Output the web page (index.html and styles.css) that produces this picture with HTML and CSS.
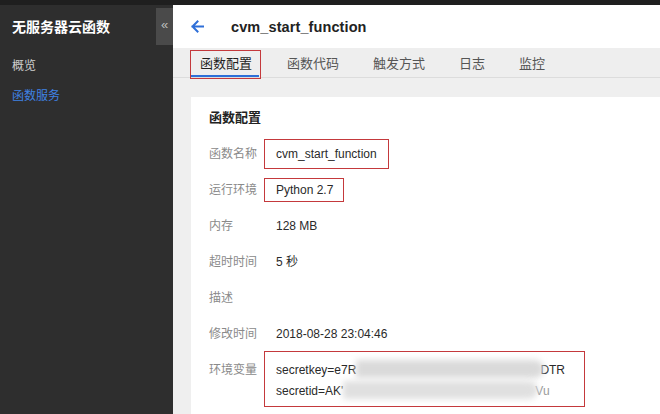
FILE: index.html
```html
<!DOCTYPE html>
<html lang="zh-CN">
<head>
<meta charset="utf-8">
<title>cvm_start_function</title>
<link rel="stylesheet" href="styles.css">
</head>
<body>
<div class="topbar"></div>
<div class="app">
  <aside class="sidebar">
    <div class="sb-title">无服务器云函数</div>
    <nav class="sb-nav">
      <a class="sb-link">概览</a>
      <a class="sb-link active">函数服务</a>
    </nav>
    <div class="collapse">«</div>
  </aside>
  <main class="main">
    <header class="header">
      <svg class="back" width="13" height="13" viewBox="0 0 13 13" aria-hidden="true">
        <path d="M6.5 1.5 L1.5 6.5 L6.5 11.5 M1.5 6.5 H12.5" fill="none" stroke="#2e6fd8" stroke-width="2" stroke-linecap="square"/>
      </svg>
      <h1 class="title">cvm_start_function</h1>
    </header>
    <div class="tabs">
      <div class="tab active">函数配置</div>
      <div class="tab">函数代码</div>
      <div class="tab">触发方式</div>
      <div class="tab">日志</div>
      <div class="tab">监控</div>
    </div>
    <div class="content">
      <section class="card">
        <h2 class="card-title">函数配置</h2>
        <div class="row"><span class="label">函数名称</span><span class="val boxed big">cvm_start_function</span></div>
        <div class="row"><span class="label">运行环境</span><span class="val boxed small">Python 2.7</span></div>
        <div class="row"><span class="label">内存</span><span class="val">128 MB</span></div>
        <div class="row"><span class="label">超时时间</span><span class="val">5 秒</span></div>
        <div class="row"><span class="label">描述</span><span class="val"></span></div>
        <div class="row"><span class="label">修改时间</span><span class="val">2018-08-28 23:04:46</span></div>
        <div class="row env">
          <span class="label">环境变量</span>
          <div class="val boxed envbox">
            <div class="envline">secretkey=e7R<span class="blur b1"></span>DTR</div>
            <div class="envline">secretid=AK'<span class="blur b2"></span><span class="faint">Vu</span></div>
          </div>
        </div>
      </section>
    </div>
  </main>
</div>
</body>
</html>
```
FILE: styles.css
```css
* { box-sizing: border-box; }
html, body { margin: 0; padding: 0; }
body {
  width: 660px;
  height: 414px;
  overflow: hidden;
  font-family: "Liberation Sans", "Noto Sans CJK SC", sans-serif;
  background: #efefef;
}
.topbar { height: 5px; background: #1f1f1f; }
.app { display: flex; height: 409px; }

.sidebar {
  width: 173px;
  flex: none;
  background: #2e2e2e;
  position: relative;
  padding: 12px 0 0 12px;
}
.sb-title {
  color: #ffffff;
  font-size: 14px;
  font-weight: bold;
  line-height: 20px;
}
.sb-nav { display: flex; flex-direction: column; margin-top: 14px; }
.sb-link {
  font-size: 12px;
  line-height: 30px;
  color: #cfcfcf;
}
.sb-link.active { color: #3f82e4; }
.collapse {
  position: absolute;
  top: 3px;
  right: 0;
  width: 17px;
  height: 37px;
  background: #4a4a4a;
  color: #bdbdbd;
  font-size: 13px;
  line-height: 34px;
  text-align: center;
}

.main { flex: 1; display: flex; flex-direction: column; min-width: 0; background: #efefef; }
.header {
  height: 43px;
  background: #fff;
  display: flex;
  align-items: center;
  padding-left: 18px;
}
.back { flex: none; }
.title {
  margin: 0 0 0 27px;
  font-size: 14.5px;
  font-weight: bold;
  color: #222;
  letter-spacing: 0.1px;
}
.tabs {
  height: 30px;
  display: flex;
  padding-left: 18px;
  background: #eeeeee;
  border-bottom: 1px solid #dcdcdc;
}
.tab {
  position: relative;
  display: flex;
  align-items: center;
  padding: 0 9px;
  margin-right: 16px;
  font-size: 13px;
  color: #555;
}
.tab:first-child { margin-right: 17px; }
.tab.active { color: #1e1e1e; }
.tab.active::before {
  content: "";
  position: absolute;
  left: 0;
  right: 2px;
  bottom: 0;
  height: 2px;
  background: #2e6fd8;
}
.tab.active::after {
  content: "";
  position: absolute;
  left: -1px;
  right: 0;
  top: 2px;
  bottom: -2px;
  border: 1px solid #c4393c;
}

.content { flex: 1; padding: 19px 0 0 18px; }
.card {
  background: #fff;
  height: 100%;
  padding: 9px 0 0 18px;
}
.card-title {
  margin: 0 0 6px;
  font-size: 13px;
  font-weight: bold;
  line-height: 24px;
  color: #222;
}
.row {
  display: flex;
  align-items: center;
  height: 36px;
}
.label {
  width: 55px;
  flex: none;
  font-size: 12px;
  color: #8a8a8a;
  line-height: 36px;
}
.val {
  font-size: 12px;
  color: #2a2a2a;
  line-height: 22px;
  padding: 0 11px;
  border: 1px solid transparent;
}
.boxed { border-color: #c4393c; }
.val.big { padding: 3px 11px; }
.val.small { padding: 0 10px 0 11px; }

.row.env { align-items: flex-start; height: auto; }
.envbox {
  width: 321px;
  margin-top: -1px;
  padding: 8px 11px 4px;
  line-height: 21px;
}
.envline { white-space: nowrap; }
.blur {
  display: inline-block;
  height: 18px;
  vertical-align: -4px;
  background: #dadada;
  border-radius: 0 10px 10px 0;
  filter: blur(3px);
}
.b1 { width: 188px; margin-right: -4px; }
.b2 { width: 195px; background: #e0e0e0; margin-right: -3px; }
.faint { color: #9a9a9a; }
```
